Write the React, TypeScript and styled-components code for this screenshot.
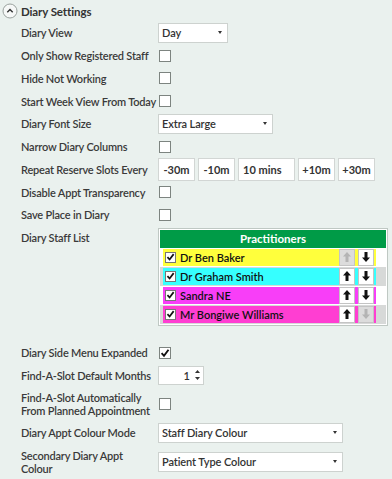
import React from "react";
import styled, { createGlobalStyle } from "styled-components";

const GlobalStyle = createGlobalStyle`
  html, body {
    margin: 0;
    padding: 0;
    background: #eaf1ee;
  }
  body {
    font-family: Lato, "Noto Sans", sans-serif;
    color: #333;
  }
`;

type Practitioner = { name: string; colour: string; upDisabled?: boolean; downDisabled?: boolean };

const practitioners: Practitioner[] = [
  { name: "Dr Ben Baker", colour: "#ffff3c", upDisabled: true },
  { name: "Dr Graham Smith", colour: "#36ffff" },
  { name: "Sandra NE", colour: "#f83ef8" },
  { name: "Mr Bongiwe Williams", colour: "#ff3ed2", downDisabled: true },
];

const App = (): JSX.Element => {
  return (
    <>
      <GlobalStyle />
      <PanelS>
        <HeaderS>
          <CollapseIcon />
          <h1>Diary Settings</h1>
        </HeaderS>
        <SettingsGridS>
          <Row label="Diary View">
            <Select width={70} value="Day" />
          </Row>
          <Row label="Only Show Registered Staff">
            <CheckBoxS />
          </Row>
          <Row label="Hide Not Working">
            <CheckBoxS />
          </Row>
          <Row label="Start Week View From Today">
            <CheckBoxS />
          </Row>
          <Row label="Diary Font Size">
            <Select width={115} value="Extra Large" />
          </Row>
          <Row label="Narrow Diary Columns">
            <CheckBoxS />
          </Row>
          <Row label="Repeat Reserve Slots Every">
            <SlotButtonsS>
              <SlotBtnS>-30m</SlotBtnS>
              <SlotBtnS>-10m</SlotBtnS>
              <SlotBtnS $wide>10 mins</SlotBtnS>
              <SlotBtnS>+10m</SlotBtnS>
              <SlotBtnS>+30m</SlotBtnS>
            </SlotButtonsS>
          </Row>
          <Row label="Disable Appt Transparency">
            <CheckBoxS />
          </Row>
          <Row label="Save Place in Diary">
            <CheckBoxS />
          </Row>
          <Row label="Diary Staff List" height={115} top>
            <StaffList />
          </Row>
          <Row label="Diary Side Menu Expanded">
            <CheckBoxS>
              <Tick />
            </CheckBoxS>
          </Row>
          <Row label="Find-A-Slot Default Months">
            <SpinnerS>
              <span>1</span>
              <SpinArrowsS>
                <svg width="5" height="3" viewBox="0 0 5 3">
                  <polygon points="2.5,0 5,3 0,3" fill="#333" />
                </svg>
                <svg width="5" height="3" viewBox="0 0 5 3">
                  <polygon points="0,0 5,0 2.5,3" fill="#333" />
                </svg>
              </SpinArrowsS>
            </SpinnerS>
          </Row>
          <Row label={"Find-A-Slot Automatically\nFrom Planned Appointment"} height={34.6}>
            <CheckBoxS />
          </Row>
          <Row label="Diary Appt Colour Mode">
            <Select width={185} value="Staff Diary Colour" />
          </Row>
          <Row label={"Secondary Diary Appt\nColour"} height={35}>
            <Select width={185} value="Patient Type Colour" />
          </Row>
        </SettingsGridS>
      </PanelS>
    </>
  );
};

export default App;

const Row = ({
  label,
  children,
  height = 22.75,
  top = false,
}: {
  label: string;
  children: React.ReactNode;
  height?: number;
  top?: boolean;
}): JSX.Element => {
  return (
    <RowS style={{ height }} $top={top}>
      <LabelS $top={top}>{label}</LabelS>
      <ControlS $top={top}>{children}</ControlS>
    </RowS>
  );
};

const Select = ({ width, value }: { width: number; value: string }): JSX.Element => {
  return (
    <SelectS style={{ width }}>
      <span>{value}</span>
      <svg width="4" height="3" viewBox="0 0 4 3">
        <polygon points="0,0 4,0 2,3" fill="#333" />
      </svg>
    </SelectS>
  );
};

const Tick = (): JSX.Element => (
  <svg width="10" height="10" viewBox="0 0 10 10">
    <path d="M1.6 5.2 L4 7.8 L8.5 1.8" stroke="#111" strokeWidth="1.9" fill="none" />
  </svg>
);

const CollapseIcon = (): JSX.Element => (
  <svg width="16" height="16" viewBox="0 0 16 16">
    <circle cx="8" cy="8" r="7" fill="#f6f8f7" stroke="#9aa29e" strokeWidth="1" />
    <path d="M5.3 9.2 L8 6.5 L10.7 9.2" stroke="#333" strokeWidth="1.4" fill="none" />
  </svg>
);

const Arrow = ({ down, disabled }: { down?: boolean; disabled?: boolean }): JSX.Element => (
  <svg width="8" height="10" viewBox="0 0 8 10" style={{ transform: down ? "rotate(180deg)" : undefined }}>
    <polygon points="4,0 8,4.5 5.5,4.5 5.5,10 2.5,10 2.5,4.5 0,4.5" fill={disabled ? "#b4b4b4" : "#111"} />
  </svg>
);

const StaffList = (): JSX.Element => {
  return (
    <StaffBoxS>
      <StaffHeadS>Practitioners</StaffHeadS>
      {practitioners.map((p, idx) => {
        return (
          <StaffRowS key={p.name} $alt={idx % 2 === 1}>
            <StaffCellS $colour={p.colour}>
              <RowCheckS>
                <Tick />
              </RowCheckS>
              <StaffNameS>{p.name}</StaffNameS>
              <MoveBtnS $disabled={p.upDisabled}>
                <Arrow disabled={p.upDisabled} />
              </MoveBtnS>
              <MoveBtnS $disabled={p.downDisabled}>
                <Arrow down disabled={p.downDisabled} />
              </MoveBtnS>
            </StaffCellS>
          </StaffRowS>
        );
      })}
    </StaffBoxS>
  );
};

const PanelS = styled.div`
  width: 392px;
  height: 479px;
  overflow: hidden;
  background: #eaf1ee;
`;

const HeaderS = styled.div`
  display: flex;
  align-items: center;
  gap: 3px;
  height: 21.6px;
  padding-left: 2px;
  padding-top: 1px;
  box-sizing: border-box;

  h1 {
    margin: 0;
    font-size: 11.5px;
    font-weight: 700;
    letter-spacing: -0.1px;
    color: #333;
  }
`;

const SettingsGridS = styled.div`
  display: flex;
  flex-direction: column;
  padding-left: 21px;
`;

const RowS = styled.div<{ $top: boolean }>`
  display: grid;
  grid-template-columns: 137px 1fr;
  align-items: ${(p) => (p.$top ? "start" : "center")};
`;

const LabelS = styled.div<{ $top: boolean }>`
  font-size: 11px;
  font-weight: 600;
  letter-spacing: -0.2px;
  line-height: 13px;
  white-space: pre;
  color: #3a3a3a;
  padding-top: ${(p) => (p.$top ? "5px" : "0")};
`;

const ControlS = styled.div<{ $top: boolean }>`
  display: flex;
  align-items: center;
  padding-top: ${(p) => (p.$top ? "1.5px" : "0")};
`;

const SelectS = styled.div`
  display: flex;
  align-items: center;
  justify-content: space-between;
  box-sizing: border-box;
  height: 20px;
  padding: 0 5px 0 3px;
  background: #fff;
  border: 1px solid #cdd2cf;
  font-size: 11px;
  font-weight: 600;
  letter-spacing: -0.1px;
  color: #333;
`;

const CheckBoxS = styled.div`
  display: flex;
  align-items: center;
  justify-content: center;
  box-sizing: border-box;
  width: 12px;
  height: 12px;
  margin-left: 1px;
  background: #fff;
  border: 1px solid #7d8480;
`;

const SlotButtonsS = styled.div`
  display: flex;
  gap: 3px;
`;

const SlotBtnS = styled.div<{ $wide?: boolean }>`
  display: flex;
  align-items: center;
  justify-content: ${(p) => (p.$wide ? "flex-start" : "center")};
  box-sizing: border-box;
  width: ${(p) => (p.$wide ? "57px" : "37px")};
  height: 23px;
  padding-left: ${(p) => (p.$wide ? "4px" : "0")};
  background: #fff;
  border: 1px solid #d2d6d4;
  font-size: 11px;
  font-weight: 700;
  color: #333;
`;

const SpinnerS = styled.div`
  display: flex;
  align-items: center;
  justify-content: flex-end;
  box-sizing: border-box;
  width: 46px;
  height: 19px;
  background: #fff;
  border: 1px solid #cdd2cf;
  padding-right: 3px;
  font-size: 11px;
  font-weight: 600;

  span {
    margin-right: 5px;
  }
`;

const SpinArrowsS = styled.div`
  display: flex;
  flex-direction: column;
  gap: 4px;
`;

const StaffBoxS = styled.div`
  box-sizing: border-box;
  width: 230px;
  padding: 1px;
  background: #fff;
  border: 1px solid #bfc8c3;
`;

const StaffHeadS = styled.div`
  display: flex;
  align-items: center;
  justify-content: center;
  height: 18px;
  background: #009b47;
  color: #fff;
  font-size: 11.5px;
  font-weight: 700;
`;

const StaffRowS = styled.div<{ $alt: boolean }>`
  display: flex;
  height: 19px;
  padding: 1px 10px 1px 3px;
  box-sizing: border-box;
  background: ${(p) => (p.$alt ? "#d7d9d8" : "#fff")};
`;

const StaffCellS = styled.div<{ $colour: string }>`
  display: flex;
  align-items: center;
  flex: 1;
  gap: 3px;
  padding: 0 2px;
  background: ${(p) => p.$colour};
`;

const RowCheckS = styled.div`
  display: flex;
  align-items: center;
  justify-content: center;
  box-sizing: border-box;
  width: 11px;
  height: 11px;
  margin-right: 1px;
  background: #fff;
  border: 1px solid #777;
`;

const StaffNameS = styled.div`
  flex: 1;
  font-size: 11px;
  font-weight: 600;
  color: #111;
`;

const MoveBtnS = styled.div<{ $disabled?: boolean }>`
  display: flex;
  align-items: center;
  justify-content: center;
  box-sizing: border-box;
  width: 16px;
  height: 17px;
  background: ${(p) => (p.$disabled ? "#dcdcdc" : "#fff")};
  border: 1px solid #c4c4c4;
`;
